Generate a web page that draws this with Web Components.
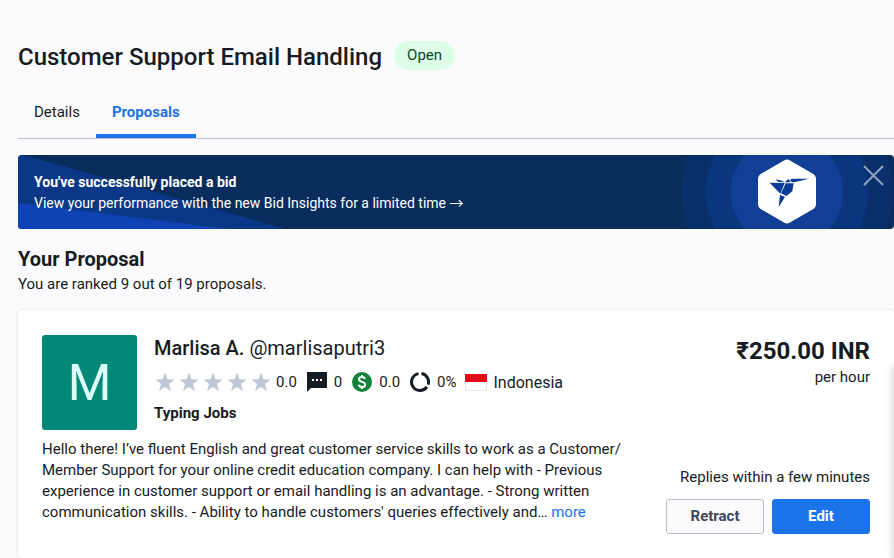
<!DOCTYPE html>
<html lang="en">
<head>
<meta charset="utf-8">
<meta name="viewport" content="width=device-width, initial-scale=1">
<title>Customer Support Email Handling</title>
<style>
  html { background: #fbfbfe; }
  body {
    margin: 0;
    font: 15px/21px Roboto, "Liberation Sans", sans-serif;
    color: #171b22;
    --blue: #1a73e8;
  }
</style>
</head>
<body>
<project-page></project-page>
<script>
const define = (name, markup, setup) => {
  const template = document.createElement('template');
  template.innerHTML = '<style>*{box-sizing:border-box}:host{display:block}</style>' + markup;
  customElements.define(name, class extends HTMLElement {
    constructor() {
      super();
      this.attachShadow({ mode: 'open' }).append(template.content.cloneNode(true));
    }
    connectedCallback() { if (setup) setup(this, this.shadowRoot); }
  });
};

define('status-pill', `
<style>
  :host { display: inline-block; padding: 4px 13px; border-radius: 16px; background: #defde9; color: #0d4422; }
</style><slot></slot>`);

define('project-header', `
<style>
  :host { display: flex; align-items: flex-start; gap: 12px; min-height: 32px; }
  h1 { margin: 0; font-size: 24px; line-height: 32px; font-weight: 500; }
</style>
<h1><slot></slot></h1><slot name="status"></slot>`);

define('tab-bar', `
<style>
  :host { border-bottom: 1px solid #bbc0ca; }
  nav { display: flex; }
</style>
<nav aria-label="Project"><slot></slot></nav>`);

define('tab-link', `
<style>
  a { display: block; padding: 16px 16px 11px; border-bottom: 4px solid transparent; color: inherit; text-decoration: none; }
  :host([active]) a { color: var(--blue); border-color: var(--blue); font-weight: 700; }
</style>
<a href="#"><slot></slot></a>`);

define('bid-banner', `
<style>
  :host { position: relative; overflow: hidden; border-radius: 4px; background: #082c5c; color: #fff; font-size: 14px; }
  svg { display: block; }
  .rays, .rings { position: absolute; top: 0; height: 100%; }
  .rays { left: 0; width: 280px; }
  .rings { right: 0; width: 214px; }
  a { display: block; position: relative; padding: 17px 16px 15px; color: inherit; text-decoration: none; }
  strong { display: block; }
  button { position: absolute; top: 10px; right: 10px; padding: 0; border: 0; background: none; color: #8fa3c4; cursor: pointer; }
  ::slotted(.arrow) { font-family: "Noto Sans CJK SC", "Liberation Sans", sans-serif; line-height: 1; }
</style>
<svg class="rays" viewBox="0 0 280 74" preserveAspectRatio="none" aria-hidden="true">
  <path d="M0 0L20 4L268 74H0Z" fill="#0b3886"/>
  <path d="M0 48L210 74H0Z" fill="#0d43b4"/>
</svg>
<svg class="rings" viewBox="0 0 214 74" aria-hidden="true">
  <circle cx="107" cy="37" r="106" fill="#09306a"/>
  <circle cx="107" cy="37" r="81" fill="#0b367d"/>
  <circle cx="107" cy="37" r="56" fill="#113f96"/>
  <path d="M104 5.500Q107 3.500 110 5.500L132.500 18.500Q136 20.500 136 24V49Q136 52.500 132.500 54.500L110 67.500Q107 69.500 104 67.500L81.500 54.500Q78 52.500 78 49V24Q78 20.500 81.500 18.500Z" fill="#fff"/>
  <g transform="translate(60 -5) scale(.33333)" fill="#0c3b96">
    <path d="M107 88L121 91L135 97L115 96ZM89 98L134 99L121 131ZM137 100L161 100L157 124L139 138L123 130ZM134 97L145 87L152 97ZM120 134L135 141L116 171ZM149 89L158 86L207 86L163 97L155 96Z"/>
  </g>
</svg>
<a href="#"><strong><slot name="title"></slot></strong><slot></slot></a>
<button type="button" aria-label="Dismiss">
  <svg width="21" height="21" viewBox="0 0 21 21" fill="none" stroke="currentColor" stroke-width="2"><path d="M1 1L20 20M20 1L1 20"/></svg>
</button>`);

define('section-heading', `
<style>
  h2 { margin: 0; font-size: 20px; line-height: 28px; font-weight: 700; }
  p { margin: 1px 0 0; }
</style>
<h2><slot></slot></h2><p><slot name="note"></slot></p>`);

define('user-avatar', `
<style>
  :host { display: grid; place-items: center; width: 95px; height: 95px; flex: none; border-radius: 3px; background: #018877; color: #dcfffa; font-size: 50px; line-height: 52px; }
</style><slot></slot>`);

define('star-rating', `
<style>
  :host { display: flex; align-items: center; gap: 4px; }
  svg { display: block; fill: #c0c8d6; }
  svg:last-of-type { margin-right: 1px; }
</style>
<slot></slot>`, (host, root) => {
  const star = '<svg width="20" height="20" viewBox="0 0 20 20" aria-hidden="true"><path d="M10 .5L12.500 7.200L19.500 7.500L14 12L16 19L10 15L4 19L6 12L.5 7.500L7.500 7.200Z"/></svg>';
  root.querySelector('slot').insertAdjacentHTML('beforebegin', star.repeat(5));
});

const icons = {
  reviews: '<svg width="20" height="20" viewBox="0 0 20 20"><path d="M0 0H20V16H4L0 20Z" fill="#171b22"/><path d="M5 7h2v2H5zM9 7h2v2H9zM13 7h2v2h-2z" fill="#fff"/></svg>',
  earnings: '<svg width="20" height="20" viewBox="0 0 20 20"><circle cx="10" cy="10" r="10" fill="#12823a"/><path d="M13 6.800C12.500 5.500 11.500 5 10 5C8.200 5 7 6 7 7.400C7 10.700 13.200 9 13.200 12.500C13.200 14 12 15 10 15C8.300 15 7 14.300 6.700 12.800M10 3V5M10 15V17" fill="none" stroke="#fff" stroke-width="2"/></svg>',
  completion: '<svg width="20" height="20" viewBox="0 0 20 20" fill="none" stroke="#171b22" stroke-width="3"><path d="M11.500 1.600A8.500 8.500 0 0 1 18.100 12.600M16.900 15A8.500 8.500 0 1 1 8.500 1.600"/></svg>',
  indonesia: '<svg width="22" height="17" viewBox="0 0 22 17"><path d="M.5 .5H21.500V16.500H.5Z" fill="#fff" stroke="#e3e5e9"/><path d="M0 0H22V8H0Z" fill="#e30a17"/></svg>'
};
define('user-stat', `
<style>
  :host { display: flex; align-items: center; gap: 7px; }
  span, svg { display: block; }
</style>
<span aria-hidden="true"></span><slot></slot>`, (host, root) => {
  root.querySelector('span').innerHTML = icons[host.getAttribute('icon')];
});

define('app-button', `
<style>
  button { width: 100%; height: 35px; padding: 0 16px; border: 1px solid #b9bfca; border-radius: 3px; background: #fbfbfe; color: #3f4858; font: inherit; font-weight: 700; cursor: pointer; }
  :host([primary]) button { border-color: var(--blue); background: var(--blue); color: #fff; }
</style>
<button type="button"><slot></slot></button>`);

define('proposal-card', `
<style>
  :host { display: grid; grid-template-columns: minmax(0, 1fr) 204px; gap: 40px; padding: 25px 24px 24px; border-radius: 4px; background: #fff; box-shadow: 0 0 3px #171b2224; }
  .user { display: flex; gap: 17px; }
  .info { display: flex; flex-direction: column; justify-content: space-between; }
  h3 { margin: 0; font-size: 20px; line-height: 26px; font-weight: 500; }
  h3 span { font-weight: 400; }
  .stats { display: flex; align-items: center; gap: 10px; min-height: 34px; padding-left: 1px; }
  user-stat[icon="indonesia"] { margin-left: -2px; font-size: 16px; }
  p { margin: 9px 0 11px; }
  p a { color: var(--blue); text-decoration: none; }
  .side { display: flex; flex-direction: column; text-align: right; }
  .price { font-size: 24px; line-height: 32px; font-weight: 700; }
  .reply { margin-top: auto; white-space: nowrap; }
  .actions { display: grid; grid-template-columns: 1fr 1fr; gap: 8px; margin-top: 11px; }
  strong { line-height: 21px; padding-bottom: 6px; }
</style>
<div>
  <div class="user">
    <user-avatar>M</user-avatar>
    <div class="info">
      <h3>Marlisa A. <span>@marlisaputri3</span></h3>
      <div class="stats">
        <star-rating>0.0</star-rating>
        <user-stat icon="reviews">0</user-stat>
        <user-stat icon="earnings">0.0</user-stat>
        <user-stat icon="completion">0%</user-stat>
        <user-stat icon="indonesia">Indonesia</user-stat>
      </div>
      <strong>Typing Jobs</strong>
    </div>
  </div>
  <p>Hello there! I’ve fluent English and great customer service skills to work as a Customer/<wbr>Member Support for your online credit education company. I can help with - Previous experience in customer support or email handling is an advantage. - Strong written communication skills. - Ability to handle customers' queries effectively and… <a href="#">more</a></p>
</div>
<div class="side">
  <div class="price">₹250.00 INR</div>
  <div>per hour</div>
  <div class="reply">Replies within a few minutes</div>
  <div class="actions"><app-button>Retract</app-button><app-button primary>Edit</app-button></div>
</div>`);

define('chat-drawer', `
<style>
  :host { position: fixed; left: 100%; top: 366px; bottom: 0; width: 280px; box-shadow: 0 0 8px #171b2240; }
</style>`);

define('project-page', `
<style>
  main { padding: 41px 0 0 18px; }
  tab-bar { margin-top: 13px; }
  bid-banner { margin-top: 16px; }
  section-heading { margin-top: 16px; }
  proposal-card { margin-top: 15px; }
</style>
<main>
  <project-header>Customer Support Email Handling<status-pill slot="status">Open</status-pill></project-header>
  <tab-bar><tab-link>Details</tab-link><tab-link active>Proposals</tab-link></tab-bar>
  <bid-banner><span slot="title">You've successfully placed a bid</span>View your performance with the new Bid Insights for a limited time <span class="arrow">→</span></bid-banner>
  <section-heading>Your Proposal<span slot="note">You are ranked 9 out of 19 proposals.</span></section-heading>
  <proposal-card></proposal-card>
</main>
<chat-drawer></chat-drawer>`);
</script>
</body>
</html>
